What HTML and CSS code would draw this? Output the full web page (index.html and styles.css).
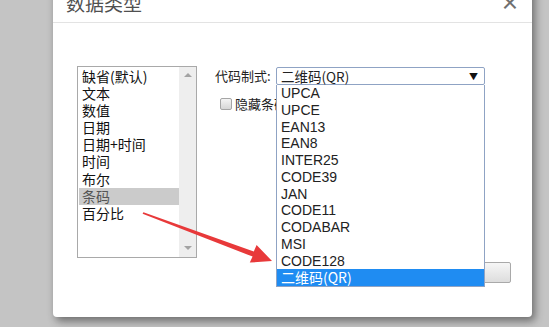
FILE: index.html
```html
<!DOCTYPE html>
<html lang="zh-CN">
    <head>
        <meta charset="UTF-8" />
        <title>数据类型</title>
        <link rel="stylesheet" href="styles.css">
    </head>
    <body>
        <div class="dialog">
            <div class="dialog-header">
                <span class="dialog-title">数据类型</span>
                <span class="dialog-close">&times;</span>
            </div>
            <div class="dialog-body">
                <div class="type-list">
                    <ul>
                        <li>缺省(默认)</li>
                        <li>文本</li>
                        <li>数值</li>
                        <li>日期</li>
                        <li>日期+时间</li>
                        <li>时间</li>
                        <li>布尔</li>
                        <li class="selected">条码</li>
                        <li>百分比</li>
                    </ul>
                    <div class="scrollbar">
                        <span class="scroll-up"></span>
                        <span class="scroll-down"></span>
                    </div>
                </div>
                <div class="options">
                    <div class="field-row">
                        <span class="field-label">代码制式:</span>
                        <div class="select-wrap">
                            <div class="select">
                                <span>二维码(QR)</span>
                                <span class="caret">&#9660;</span>
                            </div>
                            <ul class="dropdown">
                                <li>UPCA</li>
                                <li>UPCE</li>
                                <li>EAN13</li>
                                <li>EAN8</li>
                                <li>INTER25</li>
                                <li>CODE39</li>
                                <li>JAN</li>
                                <li>CODE11</li>
                                <li>CODABAR</li>
                                <li>MSI</li>
                                <li>CODE128</li>
                                <li class="active">二维码(QR)</li>
                            </ul>
                        </div>
                    </div>
                    <label class="check-row">
                        <span class="checkbox"></span>
                        <span>隐藏条码</span>
                    </label>
                    <button class="ok-btn" type="button"></button>
                </div>
            </div>
        </div>
        <!-- red annotation arrow -->
        <svg class="annotation" width="549" height="327" viewBox="0 0 549 327">
            <polygon points="143.4,212.2 253.8,251.4 256.6,245 272,261 249.8,262.6 252.6,256.6 142.6,213.8" fill="#e8393a" />
        </svg>
    </body>
</html>
```

FILE: styles.css
```css
body {
    margin: 0;
    width: 549px;
    height: 327px;
    overflow: hidden;
    background-color: #c4c4c4;
    font-family: "Liberation Sans", "Noto Sans CJK SC", sans-serif;
    color: #222222;
}

.dialog {
    width: 479px;
    height: 334px;
    margin: -17px 0 0 53px;
    background-color: #ffffff;
    border-radius: 4px;
    box-shadow: 3px 4px 8px rgba(0, 0, 0, 0.45);
}

.dialog-header {
    height: 39px;
    border-bottom: 1px solid #e3e3e3;
    display: flex;
    align-items: center;
    justify-content: space-between;
    padding: 0 14px 0 13px;
}

.dialog-title {
    font-family: "Noto Sans CJK SC", sans-serif;
    font-size: 19px;
    color: #505050;
}

.dialog-close {
    font-size: 28px;
    color: #707070;
    line-height: 1;
}

.dialog-body {
    display: flex;
    padding: 43px 0 0 24px;
    gap: 18px;
}

.type-list {
    width: 118px;
    height: 190px;
    border: 1px solid #a9a9a9;
    display: flex;
}

.type-list ul {
    list-style: none;
    margin: 0;
    padding: 1px 0 0 1px;
    width: 101px;
}

.type-list li {
    height: 17.1px;
    line-height: 17px;
    padding-left: 3px;
    font-family: "Noto Sans CJK SC", sans-serif;
    font-size: 14px;
    color: #111111;
}

.type-list li.selected {
    background-color: #cbcbcb;
    color: #555555;
}

.scrollbar {
    width: 17px;
    background-color: #eeeeee;
    display: flex;
    flex-direction: column;
    justify-content: space-between;
    align-items: center;
    padding: 6px 0 7px;
}

.scroll-up,
.scroll-down {
    width: 0;
    height: 0;
    border-left: 4px solid transparent;
    border-right: 4px solid transparent;
}

.scroll-up {
    border-bottom: 4px solid #a3a3a3;
}

.scroll-down {
    border-top: 4px solid #a3a3a3;
}

.options {
    width: 296px;
    display: flex;
    flex-direction: column;
}

.field-row {
    display: flex;
    align-items: flex-start;
    padding-top: 1px;
}

.field-label {
    width: 61px;
    font-family: "Noto Sans CJK SC", sans-serif;
    font-size: 13px;
    line-height: 18px;
    color: #222222;
}

.select-wrap {
    position: relative;
    width: 209px;
}

.select {
    height: 16px;
    border: 1px solid #8fa3c4;
    border-radius: 2px;
    display: flex;
    justify-content: space-between;
    align-items: center;
    padding: 0 6px 0 4px;
    font-family: "Noto Sans CJK SC", sans-serif;
    font-size: 13.5px;
    color: #222222;
}

.caret {
    font-size: 9px;
    color: #111111;
}

.dropdown {
    position: absolute;
    top: 18px;
    left: 0;
    z-index: 5;
    width: 207px;
    margin: 0;
    padding: 0;
    list-style: none;
    background-color: #ffffff;
    border: 1px solid #8fa3c4;
    border-top: none;
}

.dropdown li {
    height: 16.75px;
    line-height: 17px;
    padding-left: 4px;
    font-size: 14px;
    color: #222222;
}

.dropdown li.active {
    background-color: #1f8cf2;
    color: #ffffff;
    font-family: "Noto Sans CJK SC", sans-serif;
}

.check-row {
    display: flex;
    align-items: center;
    gap: 3px;
    margin: 12px 0 0 5px;
    font-family: "Noto Sans CJK SC", sans-serif;
    font-size: 13px;
    line-height: 14px;
}

.checkbox {
    width: 10px;
    height: 10px;
    border: 1px solid #a5a5a5;
    border-radius: 2px;
    background: linear-gradient(#f4f4f4, #d6d6d6);
}

.ok-btn {
    align-self: flex-end;
    width: 80px;
    height: 21px;
    margin-top: 151px;
    border: 1px solid #a9a9a9;
    border-radius: 2px;
    background: linear-gradient(#f6f6f6, #dddddd);
}

.annotation {
    position: absolute;
    top: 0;
    left: 0;
}
```
